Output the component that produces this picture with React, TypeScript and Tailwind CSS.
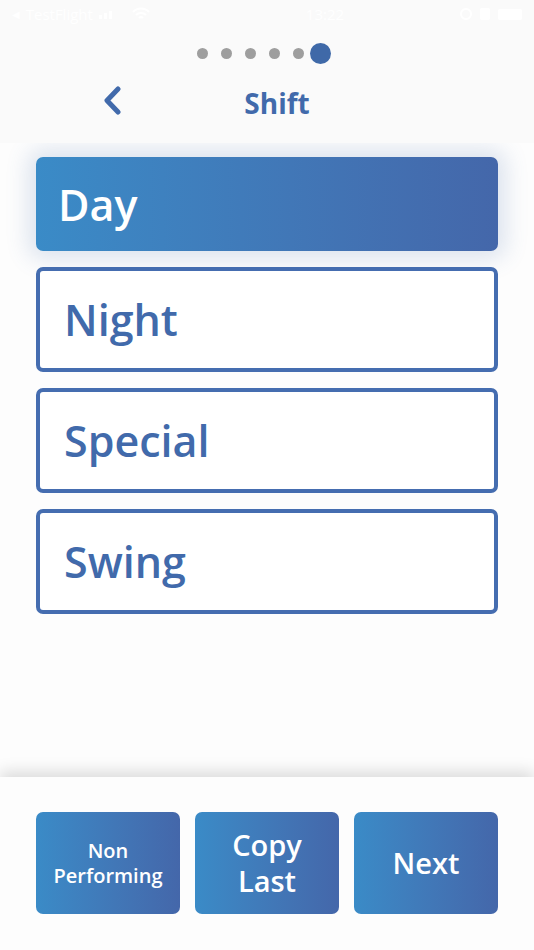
import React from "react";

const font = { fontFamily: '"Open Sans", "DejaVu Sans", sans-serif' };

function StatusBar() {
  return (
    <div className="h-[28px] flex items-center justify-between px-[12px] text-white text-[15px]" style={font}>
      <div className="flex items-center gap-[6px]">
        <span className="text-[10px]">◀</span>
        <span>TestFlight</span>
        <div className="flex items-end gap-[2px] h-[10px]">
          <div className="w-[3px] h-[4px] bg-white" />
          <div className="w-[3px] h-[6px] bg-white" />
          <div className="w-[3px] h-[8px] bg-white" />
        </div>
        <svg width="18" height="14" viewBox="0 0 18 14" className="ml-[14px]">
          <path d="M1 5a11 11 0 0 1 16 0M4 8a7 7 0 0 1 10 0M7 11a3 3 0 0 1 4 0" stroke="white" strokeWidth="2" fill="none" />
        </svg>
      </div>
      <span className="ml-[40px]">13:22</span>
      <div className="flex items-center gap-[8px]">
        <div className="w-[12px] h-[12px] rounded-full border-2 border-white" />
        <div className="w-[10px] h-[12px] bg-white rounded-[2px]" />
        <div className="w-[24px] h-[11px] bg-white rounded-[2px]" />
      </div>
    </div>
  );
}

function Header() {
  return (
    <div className="relative z-10 bg-[#fafafa] h-[143px] flex flex-col">
      <StatusBar />
      <div className="h-[50px] flex items-center justify-center pr-[6px]">
        <div className="flex items-center gap-[13px]">
          <div className="w-[11px] h-[11px] rounded-full bg-[#9e9e9e]" />
          <div className="w-[11px] h-[11px] rounded-full bg-[#9e9e9e]" />
          <div className="w-[11px] h-[11px] rounded-full bg-[#9e9e9e]" />
          <div className="w-[11px] h-[11px] rounded-full bg-[#9e9e9e]" />
          <div className="w-[11px] h-[11px] rounded-full bg-[#9e9e9e]" />
          <div className="-ml-[7px] w-[21px] h-[21px] rounded-full bg-[#3f69a8]" />
        </div>
      </div>
      <div className="relative h-[50px] flex items-center justify-center">
        <svg width="22" height="30" viewBox="0 0 22 30" className="absolute left-[102px] top-[8px]">
          <path d="M16 3 L5 14.5 L16 26" stroke="#416aab" strokeWidth="5" fill="none" strokeLinecap="round" strokeLinejoin="round" />
        </svg>
        <span className="text-[28px] font-bold text-[#416aab] ml-[20px] leading-none" style={font}>Shift</span>
      </div>
    </div>
  );
}

function Option({ label, selected }: { label: string; selected?: boolean }) {
  if (selected) {
    return (
      <div className="h-[94px] rounded-[7px] bg-gradient-to-r from-[#3a8bc7] to-[#4467aa] flex items-center pl-[22px] shadow-[0_0_22px_8px_rgba(70,110,170,0.18)]">
        <span className="text-white text-[43px] font-semibold leading-none" style={font}>{label}</span>
      </div>
    );
  }
  return (
    <div className="h-[105px] rounded-[7px] border-[4px] border-[#456db0] bg-white flex items-center pl-[24px]">
      <span className="text-[#416aab] text-[43px] font-semibold leading-none" style={font}>{label}</span>
    </div>
  );
}

function BottomButton({ children, small }: { children: React.ReactNode; small?: boolean }) {
  return (
    <div className="flex-1 h-[102px] rounded-[7px] bg-gradient-to-r from-[#3a8bc7] to-[#4467aa] flex items-center justify-center text-center">
      <span
        className={small ? "text-white text-[20px] font-semibold leading-[25px]" : "text-white text-[29px] font-semibold leading-[36px]"}
        style={font}
      >
        {children}
      </span>
    </div>
  );
}

export default function App() {
  return (
    <div className="w-[534px] h-[950px] bg-[#fdfdfd] flex flex-col overflow-hidden">
      <Header />
      <div className="flex-1 flex flex-col gap-[16px] px-[36px] pt-[14px]">
        <Option label="Day" selected />
        <Option label="Night" />
        <Option label="Special" />
        <Option label="Swing" />
      </div>
      <div className="relative z-10 h-[173px] bg-[#fdfdfd] shadow-[0_-6px_14px_rgba(0,0,0,0.13)] flex gap-[15px] px-[36px] pt-[35px]">
        <BottomButton small>
          <span className="block">Non</span>
          <span className="block">Performing</span>
        </BottomButton>
        <BottomButton>
          <span className="block">Copy</span>
          <span className="block">Last</span>
        </BottomButton>
        <BottomButton>Next</BottomButton>
      </div>
    </div>
  );
}
